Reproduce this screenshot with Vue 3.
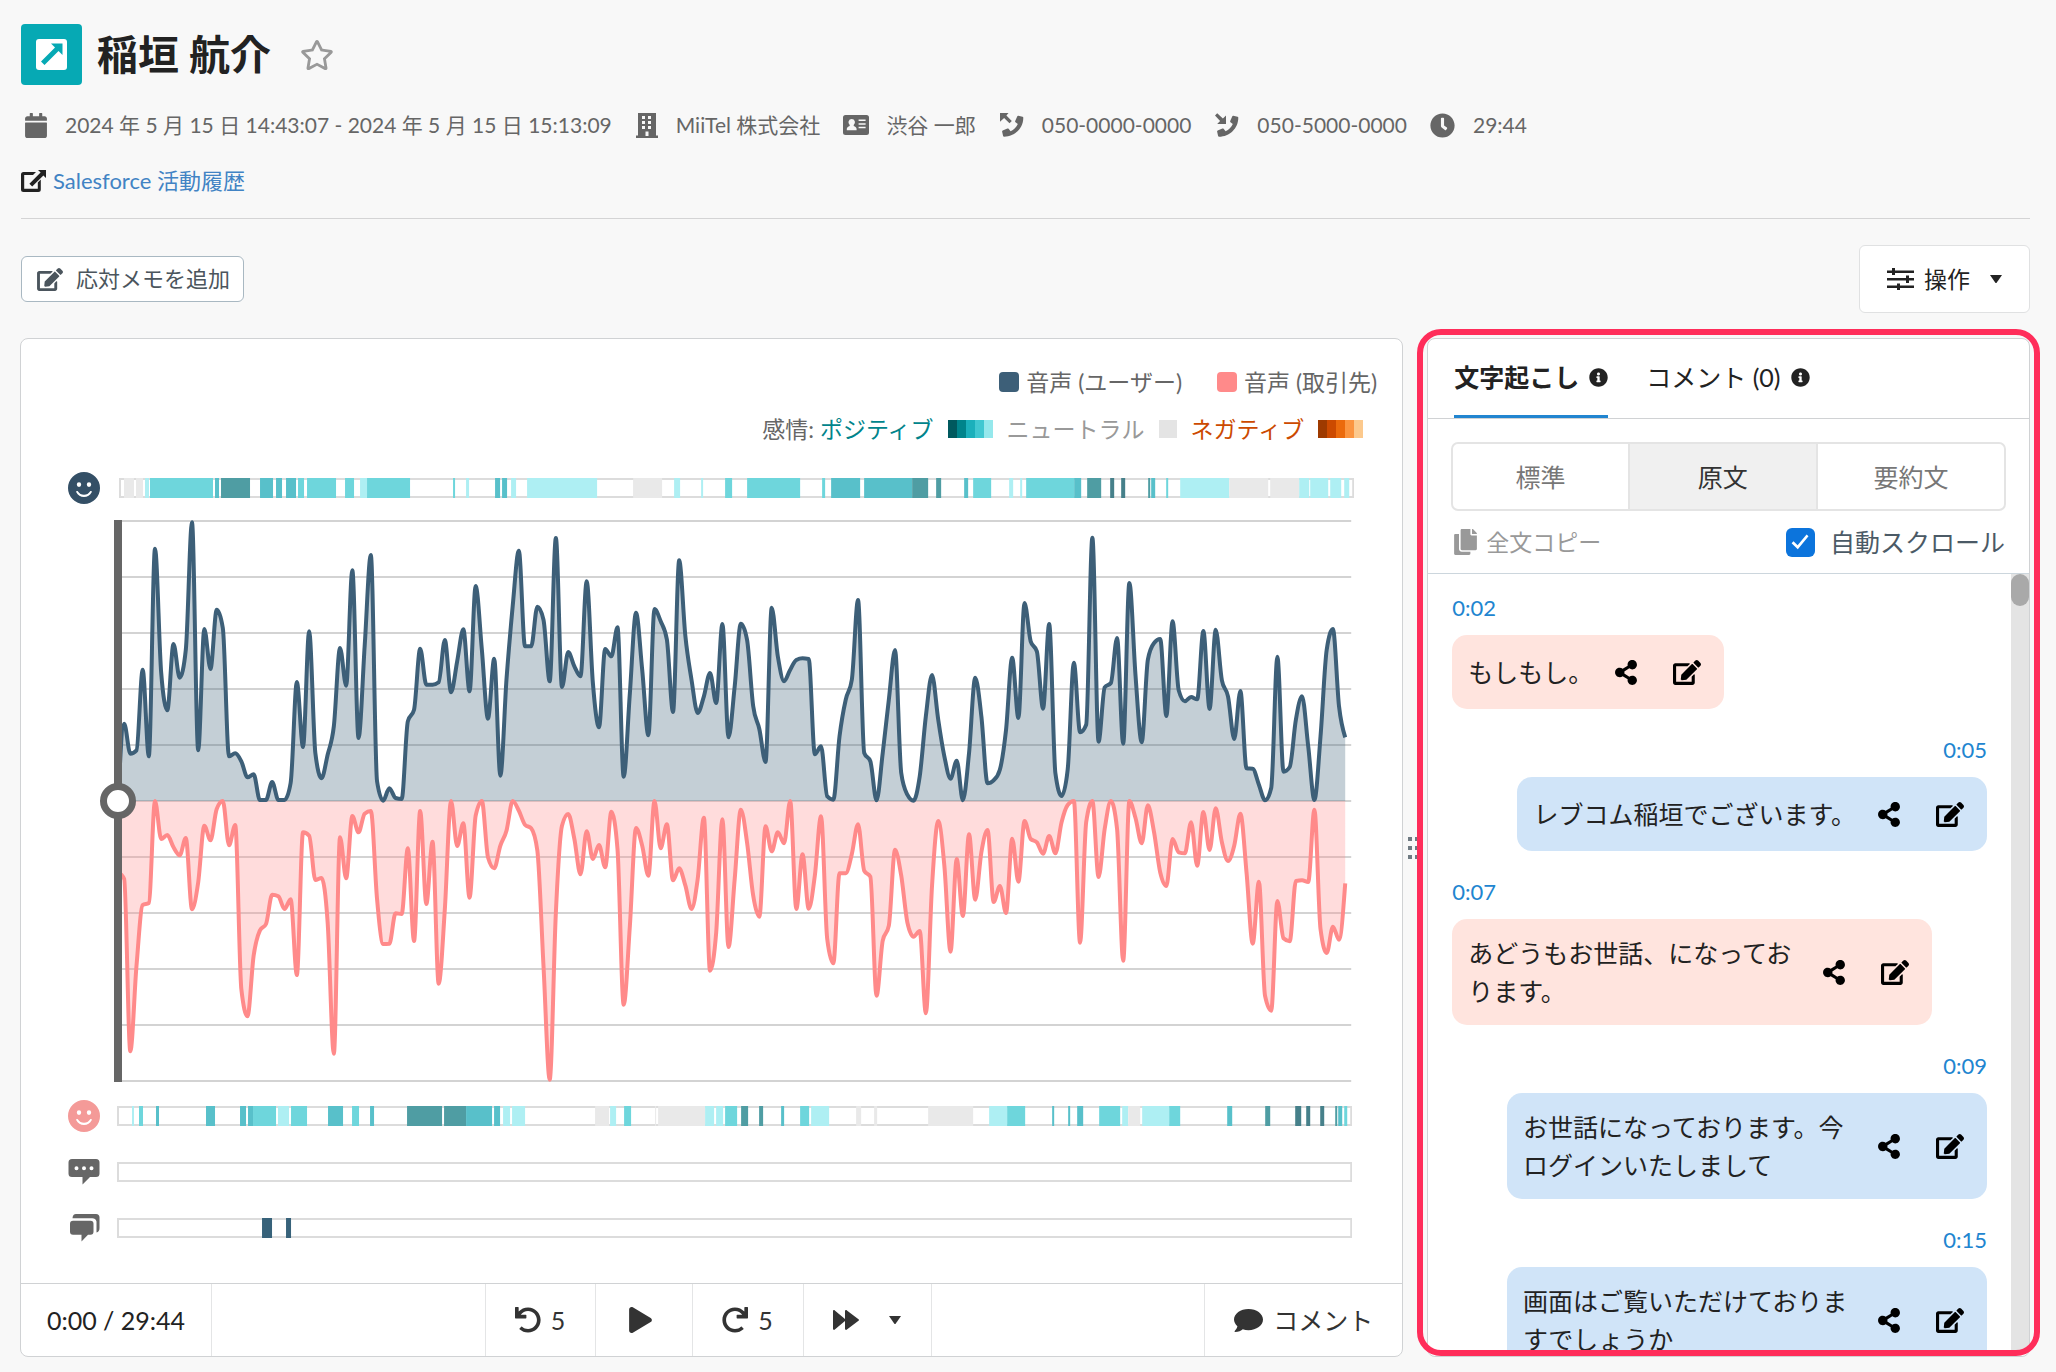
<script setup>
import { h, ref } from 'vue'

const icons = {
  star: [576, 512, 'M528.1 171.5L382 150.2 316.7 17.8c-11.7-23.6-45.6-23.9-57.4 0L194 150.2 47.9 171.5c-26.2 3.8-36.7 36.1-17.7 54.6l105.7 103-25 145.5c-4.5 26.3 23.2 46 46.4 33.7L288 439.6l130.7 68.7c23.2 12.2 50.9-7.4 46.4-33.7l-25-145.5 105.7-103c19-18.5 8.5-50.8-17.7-54.6zM388.6 312.3l23.7 138.4L288 385.4l-124.3 65.3 23.7-138.4-100.6-98 139-20.2 62.2-126 62.2 126 139 20.2-100.6 98z'],
  calendar: [448, 512, 'M12 192h424c6.6 0 12 5.4 12 12v260c0 26.5-21.5 48-48 48H48c-26.5 0-48-21.5-48-48V204c0-6.6 5.4-12 12-12zm436-44v-36c0-26.5-21.5-48-48-48h-48V12c0-6.6-5.4-12-12-12h-40c-6.6 0-12 5.4-12 12v52H160V12c0-6.6-5.4-12-12-12h-40c-6.6 0-12 5.4-12 12v52H48C21.5 64 0 85.5 0 112v36c0 6.6 5.4 12 12 12h424c6.6 0 12-5.4 12-12z'],
  building: [22, 25, 'M2 0h18v22.500h2V25H0v-2.500h2zM6 3v3h3V3zm6 0v3h3V3zM6 8v3h3V8zm6 0v3h3V8zM6 13v3h3v-3zm6 0v3h3v-3zM9.500 18.500V23h3v-4.500z'],
  idCard: [26, 20, 'M2.500 0h21A2.500 2.500 0 0 1 26 2.500v15a2.500 2.500 0 0 1-2.500 2.500h-21A2.500 2.500 0 0 1 0 17.500v-15A2.500 2.500 0 0 1 2.500 0zM8.700 4a3.300 3.300 0 0 0-2 5.900v1.100C5 11.600 3.800 12.500 3.800 14v1.200h9.800V14c0-1.500-1.200-2.400-2.900-3V9.900A3.300 3.300 0 0 0 8.700 4zM15.600 4.600v1.500h7V4.600zm0 3.600v1.500h7V8.200zm0 3.600v1.500h7v-1.500z'],
  phoneOut: [24, 25, 'M22.500 3.800l-4.200-1c-.5-.1-.9.100-1.100.6l-2 4.600c-.2.400-.1.900.3 1.200l2.300 1.900c-1.400 3.200-4 5.800-7.200 7.200l-2-2.500c-.3-.300-.7-.4-1.200-.3l-4.700 2c-.4.200-.7.700-.6 1.100l1 4.300c.1.500.5.800 1 .8C14.600 23.700 23.300 15.200 23.300 4.700c0-.5-.3-.8-.8-.9zM0 0h8.500L6.400 2.500l5.400 5.400-2.300 2.300-5.400-5.300L0 8.700z'],
  phoneIn: [24, 25, 'M22.500 3.800l-4.200-1c-.5-.1-.9.100-1.100.6l-2 4.600c-.2.400-.1.900.3 1.200l2.300 1.900c-1.400 3.200-4 5.800-7.200 7.200l-2-2.500c-.3-.300-.7-.4-1.200-.3l-4.700 2c-.4.200-.7.700-.6 1.100l1 4.300c.1.500.5.800 1 .8C14.600 23.700 23.300 15.200 23.300 4.700c0-.5-.3-.8-.8-.9zM11 11H2.200l2.900-2.900L0 2.500 2.200.2l5.700 5.300L11 2.400z'],
  clock: [512, 512, 'M256,8C119,8,8,119,8,256S119,504,256,504,504,393,504,256,393,8,256,8Zm92.490,313h0l-20,25a16,16,0,0,1-22.490,2.500h0l-67-49.720a40,40,0,0,1-15-31.230V112a16,16,0,0,1,16-16h32a16,16,0,0,1,16,16V256l58,42.500A16,16,0,0,1,348.490,321Z'],
  external: [25, 22, 'M2.500 2H15l-3 3H3.200v13.800h13.600v-6.300l3-3v10a2.500 2.500 0 0 1-2.500 2.500H2.500A2.500 2.500 0 0 1 0 19.500v-15A2.500 2.500 0 0 1 2.500 2zM17 0h8v8l-2.600-2.600-11.200 11.200-2.800-2.800L19.600 2.600z'],
  edit: [576, 512, 'M402.6 83.2l90.2 90.2c3.8 3.8 3.8 10 0 13.8L274.4 405.6l-92.8 10.3c-12.4 1.4-22.9-9.1-21.5-21.5l10.3-92.8L388.8 83.2c3.8-3.8 10-3.8 13.8 0zm162-22.9l-48.8-48.8c-15.2-15.2-39.9-15.2-55.2 0l-35.4 35.4c-3.8 3.8-3.8 10 0 13.8l90.2 90.2c3.8 3.8 10 3.8 13.8 0l35.4-35.4c15.2-15.3 15.2-40 0-55.2zM384 346.2V448H64V128h229.8c3.2 0 6.2-1.3 8.5-3.5l40-40c7.6-7.6 2.2-20.5-8.5-20.5H48C21.500 64 0 85.500 0 112v352c0 26.500 21.500 48 48 48h352c26.500 0 48-21.500 48-48V306.200c0-10.700-12.900-16-20.500-8.500l-40 40c-2.200 2.300-3.500 5.300-3.500 8.500z'],
  sliders: [27, 22, 'M0 2.500h5V0h3v2.500h19v2.500H8v2H5V5H0zM0 10h19V7.500h3V10h5v2.500h-5V15h-3v-2.500H0zM0 17.500h10V15.500h3v2h14V20H13v2h-3v-2H0z'],
  caret: [12, 8, 'M0 0h12L6.800 7.400a1 1 0 0 1-1.600 0z'],
  info: [512, 512, 'M256 8C119.043 8 8 119.083 8 256c0 136.997 111.043 248 248 248s248-111.003 248-248C504 119.083 392.957 8 256 8zm0 110c23.196 0 42 18.804 42 42s-18.804 42-42 42-42-18.804-42-42 18.804-42 42-42zm56 254c0 6.627-5.373 12-12 12h-88c-6.627 0-12-5.373-12-12v-24c0-6.627 5.373-12 12-12h12v-64h-12c-6.627 0-12-5.373-12-12v-24c0-6.627 5.373-12 12-12h64c6.627 0 12 5.373 12 12v100h12c6.627 0 12 5.373 12 12v24z'],
  copy: [448, 512, 'M320 448v40c0 13.255-10.745 24-24 24H24c-13.255 0-24-10.745-24-24V120c0-13.255 10.745-24 24-24h72v296c0 30.879 25.121 56 56 56h168zm0-344V0H152c-13.255 0-24 10.745-24 24v368c0 13.255 10.745 24 24 24h272c13.255 0 24-10.745 24-24V128H344c-13.200 0-24-10.800-24-24zm120.971-31.029L375.029 7.029A24 24 0 0 0 358.059 0H352v96h96v-6.059a24 24 0 0 0-7.029-16.970z'],
  share: [448, 512, 'M352 320c-22.608 0-43.387 7.819-59.790 20.895l-102.486-64.054a96.551 96.551 0 0 0 0-41.683l102.486-64.054C308.613 184.181 329.392 192 352 192c53.019 0 96-42.981 96-96S405.019 0 352 0s-96 42.981-96 96c0 7.158.790 14.130 2.276 20.841L155.790 180.895C139.387 167.819 118.608 160 96 160c-53.019 0-96 42.981-96 96s42.981 96 96 96c22.608 0 43.387-7.819 59.790-20.895l102.486 64.054A96.301 96.301 0 0 0 256 416c0 53.019 42.981 96 96 96s96-42.981 96-96-42.981-96-96-96z'],
  smile: [32, 32, 'M16 0a16 16 0 1 1 0 32 16 16 0 0 1 0-32zM11 10.200a2.200 2.400 0 1 0 0 4.800 2.200 2.400 0 0 0 0-4.800zM21 10.200a2.200 2.400 0 1 0 0 4.800 2.200 2.400 0 0 0 0-4.800zM8.300 20.200c1.500 2.900 4.400 4.800 7.700 4.800s6.200-1.900 7.700-4.800c.5-1.100-1-1.800-1.700-.8-1.200 2-3.400 3.300-6 3.300s-4.800-1.300-6-3.300c-.7-1-2.200-.3-1.700.8z'],
  typing: [32, 26, 'M4 0h24a3.500 3.500 0 0 1 3.500 3.500v11A3.500 3.500 0 0 1 28 18h-6l-7.500 7.500V18H4a3.500 3.500 0 0 1-3.500-3.500v-11A3.500 3.500 0 0 1 4 0zM8.500 7.300a2 2 0 1 0 0 4 2 2 0 0 0 0-4zm7.500 0a2 2 0 1 0 0 4 2 2 0 0 0 0-4zm7.500 0a2 2 0 1 0 0 4 2 2 0 0 0 0-4z'],
  chats: [32, 28, 'M8 0h20a3.500 3.500 0 0 1 3.500 3.500V14c0 2.500-1 4-3 4.500V7.500A4.500 4.500 0 0 0 24 4.200H4.500C4.500 1.500 6 0 8 0zM5 6.800h17.500A3 3 0 0 1 25.500 9.800v8a3 3 0 0 1-3 3H20L13.500 27.500v-6.700H5a3 3 0 0 1-3-3v-8a3 3 0 0 1 3-3z'],
  undo: [512, 512, 'M212.333 224.333H12c-6.627 0-12-5.373-12-12V12C0 5.373 5.373 0 12 0h48c6.627 0 12 5.373 12 12v78.112C117.773 39.279 184.260 7.470 258.175 8.007c136.906.994 246.448 111.623 246.157 248.532C504.041 393.258 393.120 504 256.333 504c-64.089 0-122.496-24.313-166.510-64.215-5.099-4.622-5.334-12.554-.467-17.420l33.967-33.967c4.474-4.474 11.662-4.717 16.401-.525C170.760 415.336 211.580 432 256.333 432c97.268 0 176-78.716 176-176 0-97.267-78.716-176-176-176-58.496 0-110.280 28.476-142.274 72.333h98.274c6.627 0 12 5.373 12 12v48c0 6.627-5.373 12-12 12z'],
  redo: [512, 512, 'M299.667 224.333H500c6.627 0 12-5.373 12-12V12c0-6.627-5.373-12-12-12h-48c-6.627 0-12 5.373-12 12v78.112C394.227 39.279 327.740 7.470 253.825 8.007 116.919 9.001 7.377 119.630 7.668 256.539 7.959 393.258 118.880 504 255.667 504c64.089 0 122.496-24.313 166.510-64.215 5.099-4.622 5.334-12.554.467-17.420l-33.967-33.967c-4.474-4.474-11.662-4.717-16.401-.525C341.240 415.336 300.420 432 255.667 432c-97.268 0-176-78.716-176-176 0-97.267 78.716-176 176-176 58.496 0 110.280 28.476 142.274 72.333h-98.274c-6.627 0-12 5.373-12 12v48c0 6.627 5.373 12 12 12z'],
  play: [448, 512, 'M424.400 214.700L72.400 6.600C43.800-10.300 0 6.100 0 47.900V464c0 37.500 40.700 60.100 72.400 41.300l352-208c31.400-18.500 31.500-64.100 0-82.600z'],
  forward: [26, 20, 'M1.800.4L12 9V1.300C12 .2 13.100-.2 13.900.4l11.600 8.800c.6.400.6 1.200 0 1.600l-11.600 8.800c-.8.600-1.900.2-1.900-.9V11L1.800 19.600C1 20.200 0 19.800 0 18.700V1.300C0 .2 1 -.2 1.800.4z'],
  comment: [29, 23, 'M14.500 0C22.500 0 29 4.700 29 10.600S22.500 21.200 14.500 21.200c-2 0-4-.3-5.700-.9C7.200 21.700 4.400 23 1 23c-.5 0-.6-.5-.3-.9 1-1.100 2.300-2.900 2.700-4.800C1.300 15.500 0 13.100 0 10.600 0 4.700 6.500 0 14.500 0z'],
  check: [18, 16, 'M15.600.5L17.500 2.200 6.800 15.300.6 9.200l1.900-1.900L6.600 11.300z'],
}

const Icon = (props) => {
  const [w, hgt, d] = icons[props.name]
  return h('svg', {
    viewBox: `0 0 ${w} ${hgt}`, width: props.w, height: props.h,
    fill: 'currentColor', 'fill-rule': 'evenodd', 'aria-hidden': 'true',
  }, [h('path', { d })])
}
Icon.props = ['name', 'w', 'h']

// Volume samples of both speakers, measured downwards from the top of each band
const USER_BASE = 1024
const userSamples = [1023,792,882,872,630,890,267,640,752,553,654,570,188,872,508,628,450,505,890,881,905,953,944,1021,1021,967,1021,1021,970,667,862,515,880,956,885,800,565,678,332,835,560,286,965,1023,986,1015,1018,785,750,567,675,675,668,541,698,605,509,695,379,570,777,597,948,660,440,273,560,560,441,480,665,235,682,577,620,650,365,670,803,568,590,503,951,700,459,630,827,448,485,540,757,302,530,660,760,710,640,730,493,833,680,492,540,740,808,907,444,590,665,630,601,596,598,884,860,1010,1020,830,720,660,421,880,905,1022,880,720,571,940,1005,1023,950,770,646,780,890,957,903,1022,880,654,770,971,962,930,810,594,775,430,545,575,747,493,940,1009,930,609,818,795,234,846,683,670,535,852,370,650,848,600,550,538,769,485,692,725,712,719,514,748,510,662,710,838,694,926,927,975,1022,985,591,936,922,780,710,860,1021,830,570,508,740,833]
const CLIENT_BASE = 66
const clientSamples = [280,300,817,560,378,372,66,180,168,205,229,177,391,310,140,184,90,66,199,138,630,712,530,455,435,347,352,390,361,588,160,170,303,297,430,824,175,298,111,160,104,96,360,495,494,403,405,208,486,96,375,188,614,390,66,201,133,356,110,66,235,268,200,155,66,95,137,148,215,560,902,400,140,105,180,286,157,240,198,265,98,210,677,440,147,200,290,66,208,136,304,268,320,390,300,116,575,460,121,504,300,92,190,350,413,142,217,160,193,66,390,226,389,290,112,480,553,283,283,225,136,275,293,650,485,440,212,290,430,473,456,703,320,126,260,518,240,411,166,362,220,153,369,321,402,179,308,126,180,190,224,171,223,130,78,66,491,130,66,294,150,66,150,545,66,118,193,79,160,280,321,180,220,223,130,260,99,213,88,190,246,200,104,280,494,308,650,695,366,478,487,306,304,309,92,450,522,443,482,313]

const MID = 281
const STEP = 1227 / 199

// Monotone cubic interpolation: smooth, without overshoot at the peaks
function curve(ys) {
  const n = ys.length
  const slope = ys.map((y, i) => (i < n - 1 ? (ys[i + 1] - y) / STEP : 0))
  const m = ys.map((_, i) => {
    if (i === 0 || i === n - 1) return 0
    const a = slope[i - 1]
    const b = slope[i]
    return a * b <= 0 ? 0 : Math.sign(a) * Math.min(Math.abs(a), Math.abs(b), Math.abs(a + b) / 4) * 2
  })
  m[0] = (3 * slope[0] - m[1]) / 2
  m[n - 1] = (3 * slope[n - 2] - m[n - 2]) / 2
  const f = (v) => v.toFixed(1)
  let d = `M1,${f(ys[0])}`
  for (let i = 1; i < n; i++) {
    const x0 = 1 + (i - 1) * STEP
    const x1 = 1 + i * STEP
    const k = STEP / 3
    d += `C${f(x0 + k)},${f(ys[i - 1] + m[i - 1] * k)} ${f(x1 - k)},${f(ys[i] - m[i] * k)} ${f(x1)},${f(ys[i])}`
  }
  return d
}
const userLine = curve(userSamples.map((v) => MID - (USER_BASE - v) / 3))
const clientLine = curve(clientSamples.map((v) => MID + (v - CLIENT_BASE) / 3))
const area = (line) => `${line}L1228,${MID}L1,${MID}Z`
const gridLines = [1, 57, 113, 169, 225, 281, 337, 393, 449, 505, 561]

// Sentiment segments: start, end, tone
const tones = { g: '#e9e9e9', a: '#aeeff3', b: '#6ed6dc', c: '#58c0ca', d: '#4f9da3', e: '#46808a', n: '#37627a' }
const parse = (s) => s.trim().split(/\s+/).map((t) => {
  const [from, to] = t.slice(1).split('-').map(Number)
  return { from, size: to - from, fill: tones[t[0]] }
})
const userMood = parse(`g5-15 g17-24 a26-30 b31-94 c96-100 d102-131 c141-154 c157-163 c167-177 b179-185 b188-217 b226-235 a241-248 b248-291 b334-336 a347-350 c376-381 c383-388 a392-397 a408-478 g514-543 a555-561 a582-584 b606-613 b628-681 b703-706 c712-741 c745-793 d793-809 d817-822 c845-849 b854-872 a890-894 a901-903 b907-955 c955-962 d968-982 e991-995 e1002-1006 d1029-1031 c1032-1036 b1047-1049 a1061-1110 g1110-1149 g1151-1180 a1180-1190 a1191-1209 a1211-1222 a1225-1230`)
const clientMood = parse(`a15-17 b22-26 c39-42 c89-98 c123-129 c131-136 b136-159 a161-172 b174-190 c211-226 b235-242 c253-257 d290-325 d327-349 c349-375 c377-383 a386-393 a395-408 g478-492 a493-499 b507-514 g538-539 g541-588 a588-597 a599-606 b608-620 d624-631 d642-646 c664-667 b683-692 a694-712 g739-744 g757-760 g811-856 a872-890 b890-908 c935-937 c951-953 c960-966 b982-1003 a1005-1011 g1011-1023 a1025-1052 b1052-1063 c1110-1115 d1148-1153 e1178-1184 e1189-1193 e1203-1207 d1218-1220 c1221-1225 b1227-1230`)
const overlaps = parse('n145-155 n169-174')

const rowsBelow = [
  { icon: 'smile', h: 32, cls: 'mood-client', items: clientMood },
  { icon: 'typing', h: 26, cls: '', items: [] },
  { icon: 'chats', h: 28, cls: '', items: overlaps },
]

const positive = ['#00595e', '#00848b', '#1bb0bb', '#41c8d1', '#95e8ec']
const negative = ['#9e3a00', '#cc4a00', '#eb6a0c', '#fb9540', '#fcc98d']

const modes = ['標準', '原文', '要約文']
const mode = ref('原文')
const autoScroll = ref(true)

const messages = [
  { time: '0:02', side: 'client', text: 'もしもし。' },
  { time: '0:05', side: 'user', text: 'レブコム稲垣でございます。' },
  { time: '0:07', side: 'client', text: 'あどうもお世話、になっております。' },
  { time: '0:09', side: 'user', text: 'お世話になっております。今ログインいたしまして' },
  { time: '0:15', side: 'user', text: '画面はご覧いただけておりますでしょうか' },
]
</script>

<template>
  <main class="page">
    <header class="head">
      <div class="title">
        <svg class="logo" viewBox="0 0 61 61" width="61" height="61" aria-hidden="true">
          <rect width="61" height="61" rx="4" fill="#06a9b4" />
          <rect x="15" y="15" width="31" height="31" rx="3" fill="#fff" />
          <path d="M30 19.500h11.500V31l-4-4L23.500 41l-3.500-3.500 14-14z" fill="#06a9b4" />
        </svg>
        <h1>稲垣 航介</h1>
        <button class="bare star" aria-label="お気に入り"><Icon name="star" w="34" h="32" /></button>
      </div>
      <ul class="meta">
        <li><span class="ico"><Icon name="calendar" w="22" h="25" /></span>2024 年 5 月 15 日 14:43:07 - 2024 年 5 月 15 日 15:13:09</li>
        <li><span class="ico"><Icon name="building" w="22" h="25" /></span>MiiTel 株式会社</li>
        <li><span class="ico"><Icon name="idCard" w="26" h="20" /></span>渋谷 一郎</li>
        <li><span class="ico"><Icon name="phoneOut" w="24" h="25" /></span>050-0000-0000</li>
        <li><span class="ico"><Icon name="phoneIn" w="24" h="25" /></span>050-5000-0000</li>
        <li><span class="ico"><Icon name="clock" w="25" h="25" /></span>29:44</li>
      </ul>
      <p class="crm"><Icon name="external" w="25" h="22" /><a href="#">Salesforce 活動履歴</a></p>
    </header>

    <div class="toolbar">
      <button class="memo"><Icon name="edit" w="26" h="23" />応対メモを追加</button>
      <button class="actions"><Icon name="sliders" w="27" h="22" />操作<Icon class="drop" name="caret" w="12" h="8" /></button>
    </div>

    <div class="panels">
      <section class="card player">
        <div class="body">
          <div class="legend">
            <span class="key"><i class="swatch user"></i>音声 (ユーザー)</span>
            <span class="key"><i class="swatch client"></i>音声 (取引先)</span>
          </div>
          <div class="legend moods">
            <span>感情: <b class="pos">ポジティブ</b></span>
            <span class="palette"><i v-for="c in positive" :key="c" :style="{ background: c }"></i></span>
            <span class="neu">ニュートラル</span>
            <span class="palette"><i class="flat"></i></span>
            <b class="neg">ネガティブ</b>
            <span class="palette"><i v-for="c in negative" :key="c" :style="{ background: c }"></i></span>
          </div>

          <div class="lane first">
            <Icon class="mood-user" name="smile" w="32" h="32" />
            <svg class="strip" viewBox="0 0 1235 20" preserveAspectRatio="none">
              <rect class="frame" width="1235" height="20" />
              <rect v-for="s in userMood" :key="s.from" :x="s.from" y="0" :width="s.size" height="20" :fill="s.fill" />
            </svg>
          </div>

          <div class="chart">
            <svg viewBox="0 0 1235 562" preserveAspectRatio="none">
              <line v-for="y in gridLines" :key="y" class="grid" x1="0" x2="1234" :y1="y" :y2="y" />
              <path :d="area(userLine)" fill="#3d5f78" fill-opacity=".3" />
              <path :d="area(clientLine)" fill="#ff8a8a" fill-opacity=".3" />
              <path class="wave" :d="userLine" stroke="#3d5f78" />
              <path class="wave" :d="clientLine" stroke="#ff8a8a" />
            </svg>
            <div class="playhead"><span class="knob"></span></div>
          </div>

          <div v-for="r in rowsBelow" :key="r.icon" class="lane">
            <Icon :class="r.cls" :name="r.icon" w="32" :h="r.h" />
            <svg class="strip" viewBox="0 0 1235 20" preserveAspectRatio="none">
              <rect class="frame" width="1235" height="20" />
              <rect v-for="s in r.items" :key="s.from" :x="s.from" y="0" :width="s.size" height="20" :fill="s.fill" />
            </svg>
          </div>
        </div>

        <footer class="controls">
          <span class="cell clock">0:00 / 29:44</span>
          <span class="cell fill"></span>
          <button class="cell back"><Icon name="undo" w="26" h="26" />5</button>
          <button class="cell play" aria-label="再生"><Icon name="play" w="23" h="26" /></button>
          <button class="cell ahead"><Icon name="redo" w="26" h="26" />5</button>
          <button class="cell speed" aria-label="再生速度"><Icon name="forward" w="26" h="20" /><Icon name="caret" w="12" h="8" /></button>
          <span class="cell fill"></span>
          <button class="cell note"><Icon name="comment" w="29" h="23" />コメント</button>
        </footer>
      </section>

      <div class="grip">
        <svg width="12" height="22" viewBox="0 0 12 22" fill="#6f7a82" aria-hidden="true">
          <path d="M0 0h4v4H0zM7 0h4v4H7zM0 9h4v4H0zM7 9h4v4H7zM0 18h4v4H0zM7 18h4v4H7z" />
        </svg>
      </div>

      <section class="card side">
        <nav class="tabs">
          <a href="#" class="tab on">文字起こし<Icon name="info" w="19" h="19" /></a>
          <a href="#" class="tab">コメント (0)<Icon name="info" w="19" h="19" /></a>
        </nav>
        <div class="modes">
          <button v-for="m in modes" :key="m" :class="{ on: m === mode }" @click="mode = m">{{ m }}</button>
        </div>
        <div class="options">
          <button class="bare copy"><Icon name="copy" w="23" h="26" />全文コピー</button>
          <label class="auto">
            <span class="box"><input v-model="autoScroll" type="checkbox"><Icon v-if="autoScroll" name="check" w="18" h="16" /></span>
            自動スクロール
          </label>
        </div>
        <div class="scroll">
          <ol class="messages">
            <li v-for="m in messages" :key="m.time" :class="m.side">
              <a href="#" class="time">{{ m.time }}</a>
              <div class="bubble">
                <p>{{ m.text }}</p>
                <button class="bare" aria-label="共有"><Icon name="share" w="22" h="25" /></button>
                <button class="bare pen" aria-label="編集"><Icon name="edit" w="28" h="25" /></button>
              </div>
            </li>
          </ol>
          <div class="track"><div class="thumb"></div></div>
        </div>
      </section>
    </div>
  </main>
</template>

<style>
body {
  margin: 0;
  background: #f8f8f8;
}
</style>

<style scoped>
.page {
  box-sizing: border-box;
  padding: 24px 26px 15px 20px;
  font-family: Lato, "Noto Sans CJK JP", sans-serif;
  font-size: 22px;
  line-height: 30px;
  color: #222;
}
.page *,
.page *::before,
.page *::after {
  box-sizing: border-box;
}
svg {
  display: block;
  flex: none;
}
button {
  font: inherit;
  color: inherit;
  cursor: pointer;
}
a {
  text-decoration: none;
}
.bare {
  padding: 0;
  border: 0;
  background: none;
}

.head {
  margin-left: 1px;
  border-bottom: 1px solid #d4d4d5;
  padding-bottom: 22px;
}
.title {
  display: flex;
  align-items: center;
}
h1 {
  margin: 0 29px 0 15px;
  font-size: 41px;
  line-height: 61px;
  font-weight: 700;
}
.star {
  color: #999;
}
.meta {
  display: flex;
  gap: 20px;
  margin: 25px 0 0;
  padding: 0;
  list-style: none;
  font-size: 21px;
  color: #666;
  white-space: nowrap;
}
.meta li {
  display: flex;
  align-items: center;
}
.ico {
  display: flex;
  justify-content: center;
  width: 30px;
  margin-right: 14px;
}
.meta li:nth-child(n + 3) .ico {
  width: 32px;
}
.crm {
  display: flex;
  align-items: center;
  gap: 7px;
  margin: 26px 0 0;
}
.crm a {
  color: #4183c4;
}

.toolbar {
  display: flex;
  justify-content: space-between;
  align-items: center;
  margin: 26px 0 25px 1px;
}
.memo,
.actions {
  display: flex;
  align-items: center;
  border: 1px solid #d4d4d5;
  border-radius: 6px;
  background: #fff;
}
.memo {
  gap: 13px;
  height: 46px;
  padding: 0 13px 0 15px;
  border-color: #a9b8c2;
  color: #4b555d;
}
.actions {
  gap: 10px;
  height: 68px;
  padding: 0 27px;
  border-color: #e0e1e2;
  font-size: 23px;
}
.drop {
  margin-left: 10px;
}

.panels {
  display: flex;
}
.card {
  display: flex;
  flex-direction: column;
  border: 1px solid #d0d2d4;
  border-radius: 8px;
  background: #fff;
}
.player {
  flex: 1384;
  min-width: 0;
}
.body {
  padding: 27px 50px 39px 47px;
  color: #666;
}
.legend {
  display: flex;
  justify-content: flex-end;
  align-items: center;
  gap: 35px;
  margin-right: -25px;
  font-size: 23px;
  line-height: 32px;
  white-space: nowrap;
}
.legend b {
  font-weight: 400;
}
.key {
  display: flex;
  align-items: center;
  gap: 7px;
}
.swatch {
  width: 20px;
  height: 20px;
  border-radius: 4px;
}
.swatch.user {
  background: #3d5f78;
}
.swatch.client {
  background: #ff8a8a;
}
.moods {
  gap: 14px;
  margin: 15px -11px 27px 0;
}
.pos {
  color: #00848b;
}
.neu {
  color: #999;
}
.neg {
  color: #cc4a00;
}
.palette {
  display: flex;
}
.palette i {
  width: 9px;
  height: 18px;
}
.palette .flat {
  width: 18px;
  background: #e4e4e4;
}
.lane {
  display: flex;
  align-items: center;
  gap: 17px;
  height: 32px;
  margin-top: 24px;
}
.lane.first {
  margin-top: 0;
}
.chart + .lane {
  margin-top: 18px;
}
.mood-user {
  color: #344f66;
}
.mood-client {
  color: #f49a98;
}
.strip {
  flex: 1;
  min-width: 0;
  height: 20px;
}
.first .strip {
  margin: 0 -2px 0 2px;
}
.frame {
  fill: none;
  stroke: #dcdcdc;
  stroke-width: 4;
  vector-effect: non-scaling-stroke;
}
.chart {
  position: relative;
  margin: 16px 0 0 49px;
}
.chart svg {
  width: 100%;
  height: 562px;
}
.grid {
  stroke: #d3d3d3;
  stroke-width: 2;
  vector-effect: non-scaling-stroke;
}
.wave {
  fill: none;
  stroke-width: 4;
  stroke-linejoin: round;
  vector-effect: non-scaling-stroke;
}
.playhead {
  position: absolute;
  top: 0;
  bottom: 0;
  left: -3px;
  display: flex;
  align-items: center;
  justify-content: center;
  width: 8px;
  background: #666;
}
.knob {
  flex: none;
  width: 36px;
  height: 36px;
  border: 7px solid #666;
  border-radius: 50%;
  background: #fff;
}

.controls {
  display: flex;
  height: 73px;
  border-top: 1px solid #d0d2d4;
  font-size: 25px;
}
.cell {
  display: flex;
  align-items: center;
  justify-content: center;
  gap: 10px;
  padding: 0;
  border: 0;
  border-right: 1px solid #e4e5e6;
  background: none;
  color: #333;
  white-space: nowrap;
}
.cell:last-child {
  border-right: 0;
}
.fill {
  flex: 1;
}
.clock {
  width: 191px;
  color: #222;
}
.back {
  width: 110px;
}
.play {
  width: 97px;
  padding-right: 7px;
}
.ahead {
  width: 111px;
}
.speed {
  width: 128px;
  gap: 30px;
}
.note {
  width: 197px;
}

.grip {
  display: flex;
  align-items: center;
  width: 24px;
  padding-left: 5px;
}

.side {
  position: relative;
  flex: 602;
  min-width: 0;
  font-size: 25px;
}
.side::after {
  content: "";
  position: absolute;
  inset: -10px -11px 0 -11px;
  border: 6px solid #ff2d5a;
  border-radius: 24px;
  pointer-events: none;
}
.tabs {
  display: flex;
  gap: 38px;
  height: 80px;
  padding: 0 26px;
  border-bottom: 1px solid #d0d2d4;
}
.tab {
  display: flex;
  align-items: center;
  gap: 10px;
  border-bottom: 3px solid transparent;
  color: #222;
  white-space: nowrap;
}
.tab.on {
  border-color: #2185d0;
  font-weight: 700;
}
.modes {
  display: flex;
  margin: 23px 23px 0;
  border: 2px solid #e4e4e4;
  border-radius: 7px;
}
.modes button {
  flex: 16;
  height: 65px;
  padding: 0;
  border: 0;
  border-left: 2px solid #e4e4e4;
  background: none;
  color: #777;
}
.modes button:first-child {
  flex: 15;
  border-left: 0;
}
.modes .on {
  background: #f0f0f0;
  color: #333;
}
.options {
  display: flex;
  justify-content: space-between;
  align-items: center;
  height: 63px;
  padding: 0 24px 0 26px;
  border-bottom: 1px solid #ccd6dd;
}
.copy {
  display: flex;
  align-items: center;
  gap: 9px;
  font-size: 23px;
  color: #999;
}
.auto {
  display: flex;
  align-items: center;
  gap: 15px;
  color: #4b5a66;
}
.box {
  display: grid;
  place-items: center;
  color: #fff;
}
.box > * {
  grid-area: 1 / 1;
}
.box input {
  width: 29px;
  height: 29px;
  margin: 0;
  border-radius: 6px;
  background: #0c74dc;
  appearance: none;
}
.box svg {
  pointer-events: none;
}
.scroll {
  display: flex;
  flex-grow: 1;
  height: 0;
  margin-bottom: 5px;
  overflow: hidden;
}
.messages {
  flex: 1;
  min-width: 0;
  margin: 0;
  padding: 19px 24px 0;
  list-style: none;
}
.messages li {
  display: flex;
  flex-direction: column;
  align-items: flex-start;
  margin-bottom: 26px;
}
.messages .user {
  align-items: flex-end;
}
.time {
  margin-bottom: 12px;
  font-size: 22px;
  color: #2185d0;
}
.bubble {
  display: flex;
  align-items: center;
  max-width: 480px;
  min-height: 74px;
  padding: 15px 23px 15px 16px;
  border-radius: 15px;
  background: #ffe4de;
  color: #000;
}
.user .bubble {
  background: #d0e4f8;
}
.bubble p {
  flex: 1;
  margin: 0 22px 0 0;
  line-height: 38px;
  color: #222;
}
.pen {
  margin-left: 36px;
}
.track {
  width: 18px;
  background: #e4e4e4;
}
.thumb {
  height: 32px;
  border-radius: 9px;
  background: #a9a9a9;
}
</style>
